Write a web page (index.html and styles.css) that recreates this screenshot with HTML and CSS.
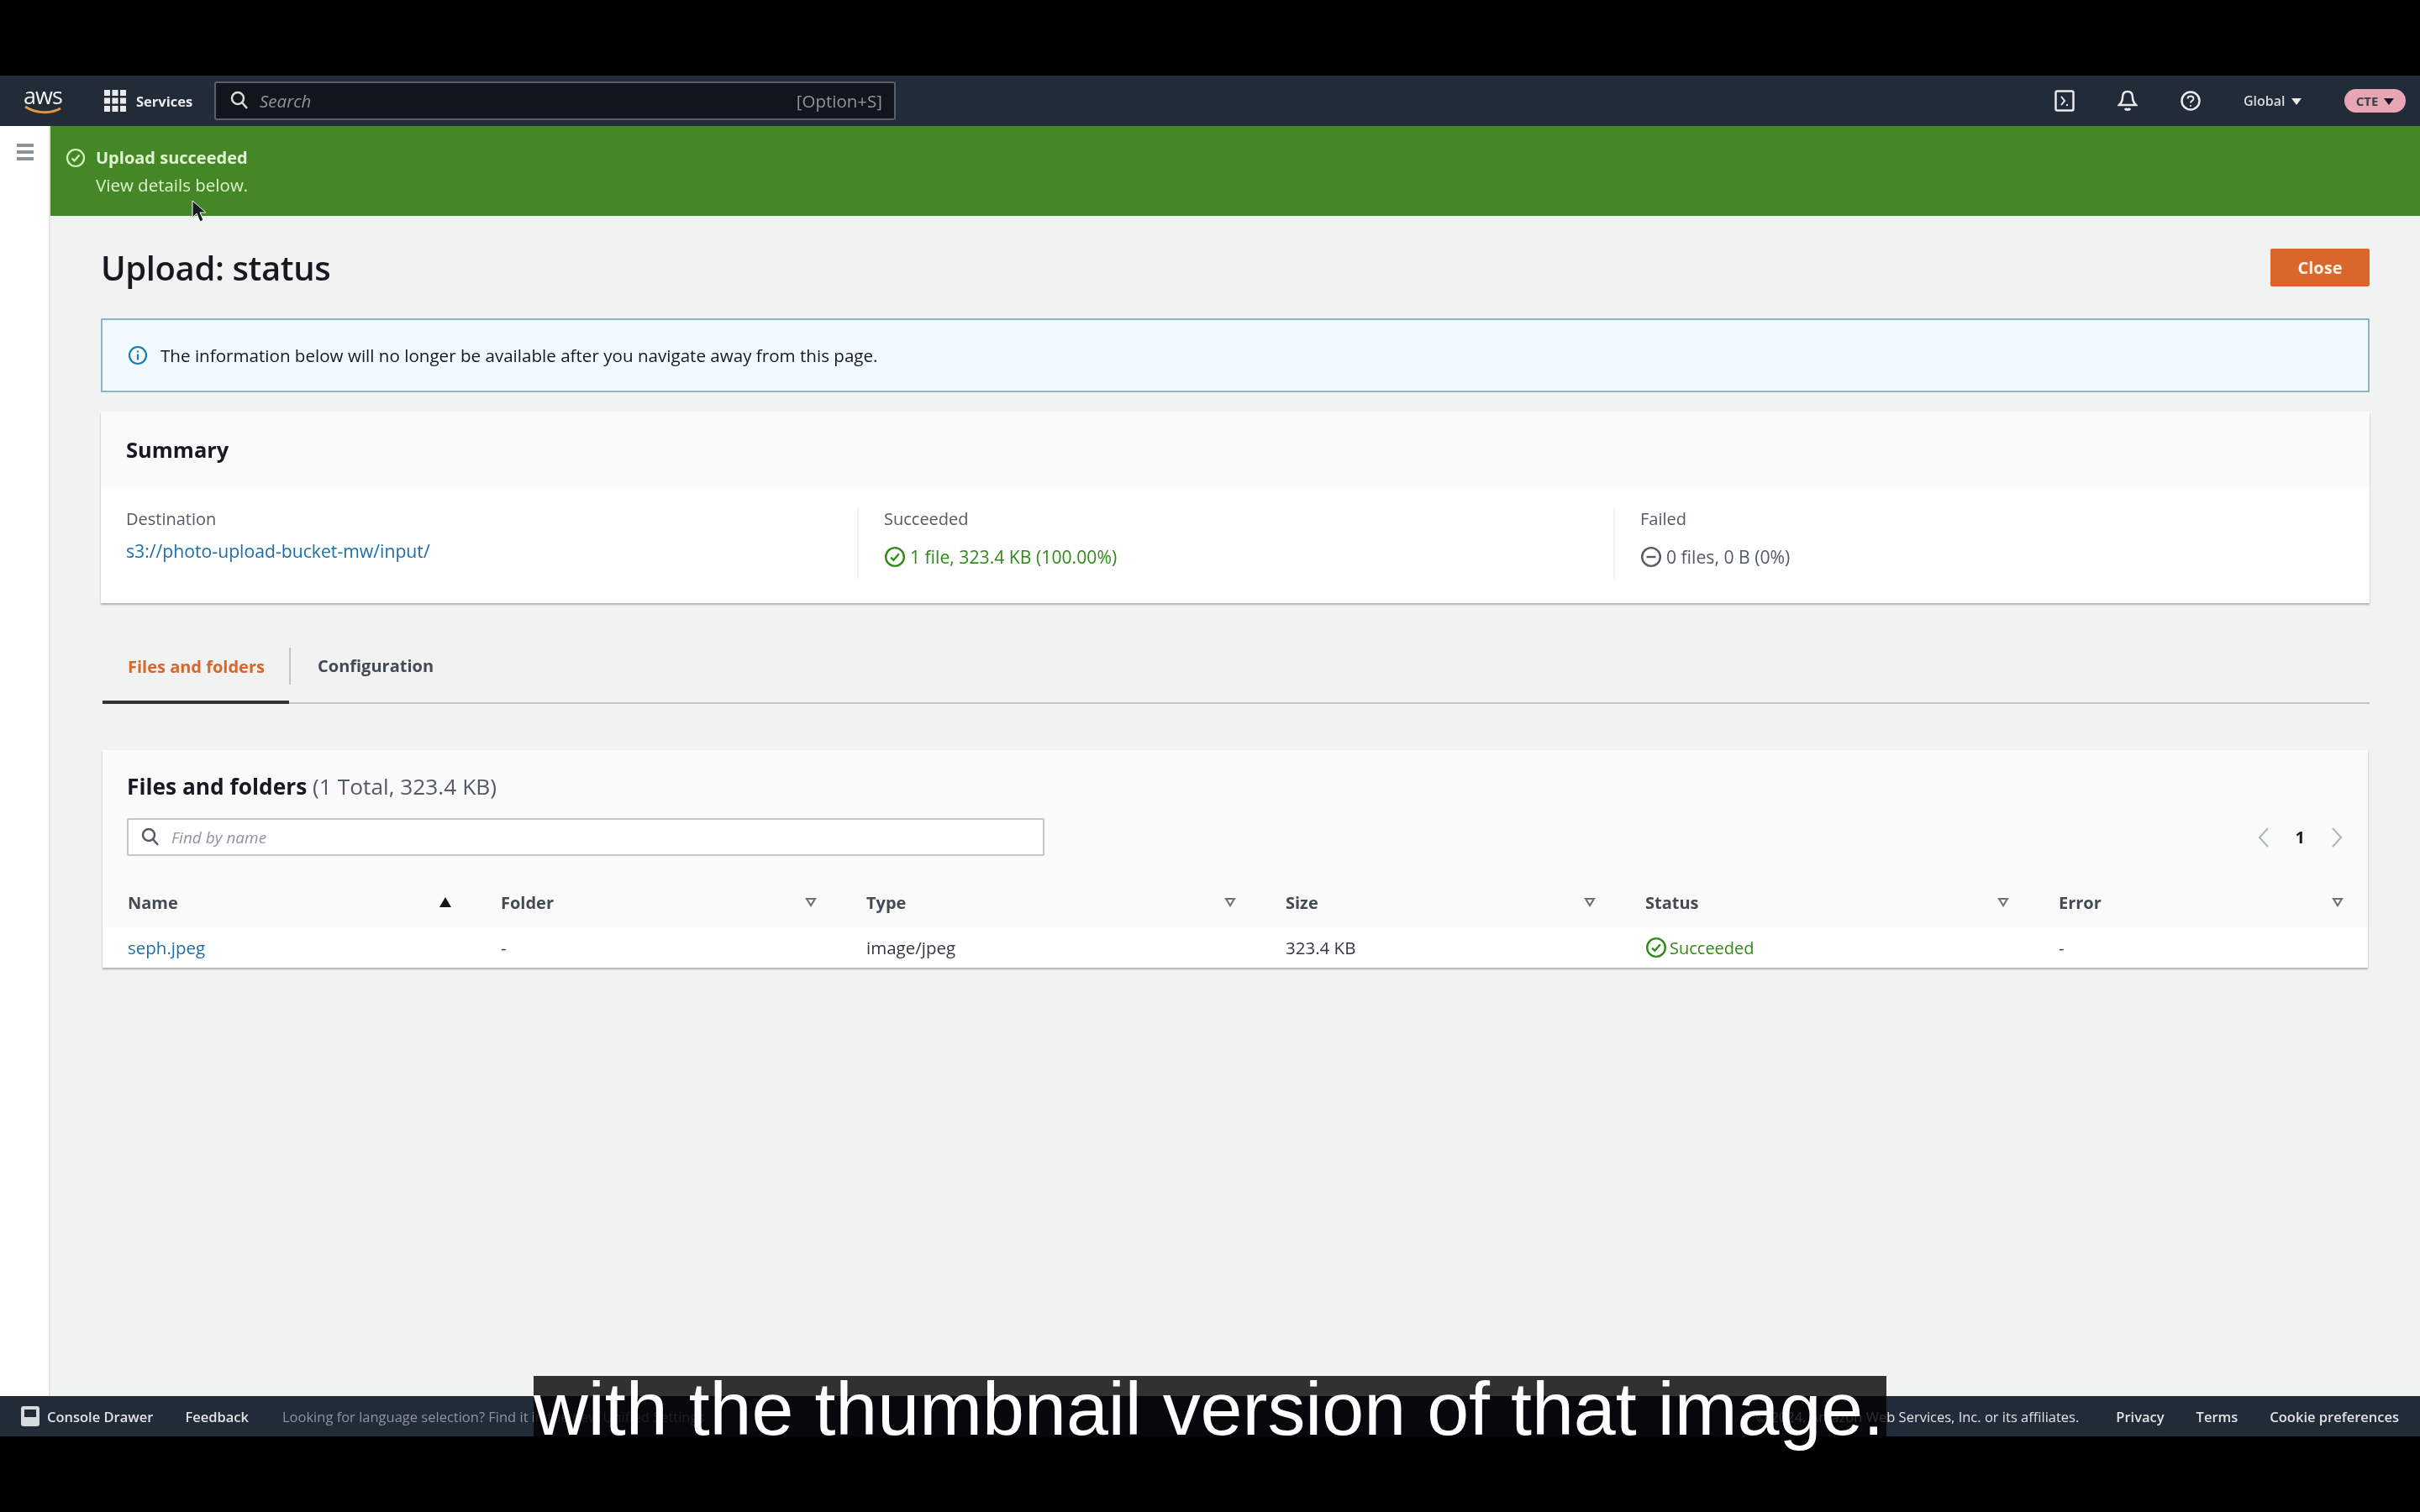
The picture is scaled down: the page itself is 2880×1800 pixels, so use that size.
FILE: index.html
```html
<!DOCTYPE html>
<html lang="en">
<head>
  <meta charset="UTF-8">
  <title>Upload: status</title>
  <link rel="stylesheet" href="styles.css">
</head>
<body>

  <div class="console">
    <header class="topnav">
      <div class="logo">
        <span class="logo-text">aws</span>
        <svg class="logo-smile" width="48" height="12" viewBox="0 0 48 12"><path d="M2 2c12 8 30 9 42 2" fill="none" stroke="#e0973a" stroke-width="3"/></svg>
      </div>
      <div class="services">
        <svg width="26" height="26" viewBox="0 0 26 26" fill="#e8eaed">
          <rect x="0" y="0" width="7" height="7"/><rect x="9.5" y="0" width="7" height="7"/><rect x="19" y="0" width="7" height="7"/>
          <rect x="0" y="9.5" width="7" height="7"/><rect x="9.5" y="9.5" width="7" height="7"/><rect x="19" y="9.5" width="7" height="7"/>
          <rect x="0" y="19" width="7" height="7"/><rect x="9.5" y="19" width="7" height="7"/><rect x="19" y="19" width="7" height="7"/>
        </svg>
        <span>Services</span>
      </div>
      <div class="searchbar">
        <svg width="22" height="24" viewBox="0 0 22 24" fill="none" stroke="#d5dbdb" stroke-width="2.5"><circle cx="9" cy="9" r="7"/><path d="M14 14l6 7"/></svg>
        <span class="search-hint">Search</span>
        <span class="search-key">[Option+S]</span>
      </div>
      <div class="nav-right">
        <svg class="nav-icon" width="24" height="26" viewBox="0 0 24 26" fill="none" stroke="#e8eaed" stroke-width="2.5"><rect x="1.5" y="1.5" width="21" height="23" rx="2"/><path d="M8 8l4 5-4 5" stroke-width="2"/><path d="M14 18h2" stroke-width="2"/></svg>
        <svg class="nav-icon" width="24" height="26" viewBox="0 0 24 26" fill="none" stroke="#e8eaed" stroke-width="2.5"><path d="M12 2c-4 0-6 3-6 7 0 4-1 6-4 9h20c-3-3-4-5-4-9 0-4-2-7-6-7z"/><path d="M9 22c1 2 5 2 6 0" stroke-width="3"/></svg>
        <svg class="nav-icon" width="24" height="24" viewBox="0 0 24 24" fill="none" stroke="#e8eaed" stroke-width="2.5"><circle cx="12" cy="12" r="10.5"/><path d="M8.5 9.5c0-4 7-4 7 0 0 2.500-3.500 2.500-3.500 5" stroke-width="2"/><circle cx="12" cy="18" r="1" fill="#e8eaed" stroke="none"/></svg>
        <span class="region">Global <i class="caret"></i></span>
        <span class="account">CTE <i class="caret caret-dark"></i></span>
      </div>
    </header>

    <div class="workspace">
      <aside class="sidebar">
        <div class="hamburger"><i></i><i></i><i></i></div>
      </aside>

      <div class="main">
        <div class="flash">
          <svg class="flash-icon" width="24" height="24" viewBox="0 0 24 24" fill="none" stroke="#d6f5c4" stroke-width="2.200"><circle cx="12" cy="12" r="10"/><path d="M7.500 12.500l3 3 6-7"/></svg>
          <div>
            <div class="flash-title">Upload succeeded</div>
            <div class="flash-text">View details below.</div>
          </div>
        </div>

        <div class="content">
          <div class="page-head">
            <h1>Upload: status</h1>
            <button class="btn-close">Close</button>
          </div>

          <div class="info">
            <svg width="24" height="24" viewBox="0 0 24 24" fill="none" stroke="#1c7ab5" stroke-width="2.200"><circle cx="12" cy="12" r="10"/><path d="M12 10.500v7"/><path d="M12 6.500v2"/></svg>
            <span>The information below will no longer be available after you navigate away from this page.</span>
          </div>

          <section class="card summary">
            <h2 class="card-head">Summary</h2>
            <div class="summary-cols">
              <div class="summary-col">
                <div class="label">Destination</div>
                <a class="link dest">s3://photo-upload-bucket-mw/input/</a>
              </div>
              <div class="summary-col">
                <div class="label">Succeeded</div>
                <div class="value ok">
                  <svg width="26" height="26" viewBox="0 0 24 24" fill="none" stroke="#2f8a17" stroke-width="2.200"><circle cx="12" cy="12" r="10"/><path d="M7.500 12.500l3 3 6-7"/></svg>
                  1 file, 323.4 KB (100.00%)
                </div>
              </div>
              <div class="summary-col">
                <div class="label">Failed</div>
                <div class="value muted">
                  <svg width="26" height="26" viewBox="0 0 24 24" fill="none" stroke="#545b64" stroke-width="2.200"><circle cx="12" cy="12" r="10"/><path d="M7 12h10"/></svg>
                  0 files, 0 B (0%)
                </div>
              </div>
            </div>
          </section>

          <div class="tabs">
            <div class="tab active">Files and folders</div>
            <div class="tab">Configuration</div>
          </div>

          <section class="card files">
            <div class="files-head">
              <h2 class="files-title">Files and folders <span>(1 Total, 323.4 KB)</span></h2>
              <div class="files-tools">
                <div class="finder">
                  <svg width="22" height="24" viewBox="0 0 22 24" fill="none" stroke="#545b64" stroke-width="2.500"><circle cx="9" cy="9" r="7"/><path d="M14 14l6 7"/></svg>
                  <span>Find by name</span>
                </div>
                <div class="pager">
                  <svg width="14" height="26" viewBox="0 0 14 26" fill="none" stroke="#aab7b8" stroke-width="2"><path d="M12 2L2 13l10 11"/></svg>
                  <b>1</b>
                  <svg width="14" height="26" viewBox="0 0 14 26" fill="none" stroke="#aab7b8" stroke-width="2"><path d="M2 2l10 11L2 24"/></svg>
                </div>
              </div>
            </div>

            <div class="table-row table-header">
              <div class="th">Name <svg width="14" height="12" viewBox="0 0 14 12"><path d="M7 0l7 12H0z" fill="#16191f"/></svg></div>
              <div class="th">Folder <svg width="14" height="12" viewBox="0 0 14 12"><path d="M2 2h10L7 10z" fill="none" stroke="#687078" stroke-width="2"/></svg></div>
              <div class="th">Type <svg width="14" height="12" viewBox="0 0 14 12"><path d="M2 2h10L7 10z" fill="none" stroke="#687078" stroke-width="2"/></svg></div>
              <div class="th">Size <svg width="14" height="12" viewBox="0 0 14 12"><path d="M2 2h10L7 10z" fill="none" stroke="#687078" stroke-width="2"/></svg></div>
              <div class="th">Status <svg width="14" height="12" viewBox="0 0 14 12"><path d="M2 2h10L7 10z" fill="none" stroke="#687078" stroke-width="2"/></svg></div>
              <div class="th th-last">Error <svg width="14" height="12" viewBox="0 0 14 12"><path d="M2 2h10L7 10z" fill="none" stroke="#687078" stroke-width="2"/></svg></div>
            </div>
            <div class="table-row table-body">
              <div><a class="link">seph.jpeg</a></div>
              <div>-</div>
              <div>image/jpeg</div>
              <div>323.4 KB</div>
              <div class="ok status-cell">
                <svg width="26" height="26" viewBox="0 0 24 24" fill="none" stroke="#2f8a17" stroke-width="2.200"><circle cx="12" cy="12" r="10"/><path d="M7.500 12.500l3 3 6-7"/></svg>
                Succeeded
              </div>
              <div>-</div>
            </div>
          </section>
        </div>
      </div>
    </div>

    <footer class="bottombar">
      <div class="foot-left">
        <svg width="22" height="24" viewBox="0 0 22 24"><rect x="0" y="0" width="22" height="24" rx="3" fill="#d5dbdb"/><rect x="4" y="4" width="14" height="9" fill="#232b37"/></svg>
        <span class="foot-drawer">Console Drawer</span>
        <span class="foot-feedback">Feedback</span>
        <span class="foot-note">Looking for language selection? Find it in the new Unified Settings</span>
      </div>
      <div class="foot-right">
        <span class="foot-copy">© 2024, Amazon Web Services, Inc. or its affiliates.</span>
        <span class="foot-privacy">Privacy</span>
        <span>Terms</span>
        <span>Cookie preferences</span>
      </div>
    </footer>
  </div>

  <svg class="cursor" width="20" height="28" viewBox="0 0 20 28"><path d="M2 1v20l5-5 4 10 4-2-4-9h7z" fill="#16191f" stroke="#fff" stroke-width="1"/></svg>

  <div class="caption">with the thumbnail version of that image.</div>

</body>
</html>
```

FILE: styles.css
```css
* {
  box-sizing: border-box;
}

body {
  margin: 0;
  height: 1800px;
  padding-top: 90px;
  background-color: #000;
  font-family: "Open Sans", "Noto Sans", sans-serif;
  color: #16191f;
  overflow: hidden;
}

.console {
  height: 1620px;
  display: flex;
  flex-direction: column;
  background-color: #f1f2f2;
  filter: blur(0.7px);
}

/* top nav */
.topnav {
  height: 60px;
  display: flex;
  align-items: center;
  padding-left: 28px;
  padding-right: 17px;
  background-color: #222b38;
  color: #e8eaed;
}

.logo {
  width: 96px;
  display: flex;
  flex-direction: column;
  font-size: 27px;
  line-height: 22px;
  color: #f2f3f3;
}

.logo-text {
  letter-spacing: -1px;
}

.services {
  width: 131px;
  display: flex;
  align-items: center;
  gap: 12px;
  font-size: 16.500px;
  font-weight: 700;
}

.searchbar {
  width: 811px;
  height: 46px;
  display: flex;
  align-items: center;
  padding: 0 14px 0 17px;
  background-color: #11161c;
  border: 2px solid #59606b;
  border-radius: 3px;
  color: #8d949c;
  font-size: 20.500px;
}

.search-hint {
  margin-left: 13px;
  font-style: italic;
}

.search-key {
  margin-left: auto;
}

.nav-right {
  margin-left: auto;
  display: flex;
  align-items: center;
}

.nav-icon {
  margin-right: 51px;
}

.region {
  width: 120px;
  font-size: 16px;
  font-weight: 600;
  color: #d5dbdb;
}

.caret {
  display: inline-block;
  margin-left: 3px;
  border-left: 6px solid transparent;
  border-right: 6px solid transparent;
  border-top: 8px solid #e8eaed;
  vertical-align: 1px;
}

.caret-dark {
  border-top-color: #16191f;
}

.account {
  width: 73px;
  height: 28px;
  line-height: 28px;
  text-align: center;
  border-radius: 14px;
  background-color: #e8a5b4;
  color: #3a3f48;
  font-size: 15px;
  font-weight: 700;
}

/* page */
.workspace {
  flex: 1;
  display: flex;
  min-height: 0;
}

.sidebar {
  width: 60px;
  padding: 21px 0 0 20px;
  background-color: #fff;
  border-right: 2px solid #e4e6e6;
}

.hamburger i {
  display: block;
  width: 20px;
  height: 4px;
  margin-bottom: 4px;
  background-color: #8a9199;
}

.main {
  flex: 1;
  min-width: 0;
}

.flash {
  height: 107px;
  display: flex;
  align-items: flex-start;
  gap: 12px;
  padding: 24px 0 0 18px;
  background-color: #458727;
  color: #dff5d0;
  font-size: 20px;
}

.flash-icon {
  flex-shrink: 0;
  margin-top: 2px;
}

.flash-title {
  font-weight: 700;
  line-height: 28px;
}

.flash-text {
  margin-top: 4px;
  font-size: 20.500px;
  line-height: 28px;
}

.content {
  padding: 0 60px 0 60px;
}

.page-head {
  height: 122px;
  display: flex;
  align-items: center;
  justify-content: space-between;
}

h1 {
  margin: 0;
  font-size: 40px;
  font-weight: 600;
  letter-spacing: -0.4px;
  color: #16191f;
}

.btn-close {
  width: 118px;
  height: 45px;
  border: none;
  border-radius: 2px;
  background-color: #d9662b;
  color: #fff3e6;
  font-family: inherit;
  font-size: 20px;
  font-weight: 700;
}

.info {
  height: 88px;
  display: flex;
  align-items: center;
  gap: 15px;
  padding-left: 30px;
  background-color: #f1faff;
  border: 2px solid #8fb4c9;
  font-size: 20.600px;
}

.card {
  background-color: #fff;
  box-shadow: 0 2px 2px rgba(0, 0, 0, 0.28);
}

.summary {
  margin-top: 23px;
}

.card-head {
  height: 91px;
  margin: 0;
  padding-left: 30px;
  line-height: 91px;
  background-color: #fafafa;
  font-size: 25.500px;
  font-weight: 700;
}

.summary-cols {
  height: 137px;
  display: grid;
  grid-template-columns: 870px 900px 1fr;
  padding-left: 30px;
}

.summary-col {
  padding-top: 23px;
  font-size: 20px;
}

.summary-col + .summary-col {
  padding-left: 30px;
  border-left: 2px solid #f1f2f2;
  height: 85px;
  margin-top: 23px;
  padding-top: 0;
}

.label {
  color: #545b64;
  line-height: 28px;
}

.link {
  color: #1b6fa8;
}

.dest {
  display: block;
  margin-top: 10px;
  font-size: 21.200px;
  line-height: 28px;
}

.value {
  display: flex;
  align-items: center;
  gap: 5px;
  margin-top: 17px;
  font-size: 21.200px;
  line-height: 28px;
}

.ok {
  color: #2f8a17;
}

.muted {
  color: #545b64;
}

/* tabs */
.tabs {
  height: 120px;
  display: flex;
  align-items: flex-end;
  margin-left: 2px;
  border-bottom: 2px solid #c5c8c8;
  font-size: 20px;
  font-weight: 700;
  color: #444b55;
}

.tab {
  height: 91px;
  line-height: 95px;
  padding: 0 34px;
  position: relative;
}

.tab.active {
  width: 222px;
  padding: 0 30px;
  line-height: 93px;
  color: #d9662b;
  border-bottom: 4px solid #333;
  margin-bottom: -2px;
  white-space: nowrap;
}

.tab.active::after {
  content: "";
  position: absolute;
  right: -2px;
  top: 24px;
  height: 44px;
  border-right: 2px solid #c5c8c8;
}

/* files table */
.files {
  margin: 55px 2px 0;
  height: 259px;
  background-color: #fafafa;
}

.files-head {
  height: 176px;
  padding: 24px 29px 0;
}

.files-title {
  margin: 0;
  line-height: 38px;
  font-size: 26.300px;
  font-weight: 700;
}

.files-title span {
  font-weight: 400;
  color: #545b64;
}

.files-tools {
  display: flex;
  align-items: center;
  justify-content: space-between;
  margin-top: 19px;
}

.finder {
  width: 1092px;
  height: 45px;
  display: flex;
  align-items: center;
  gap: 14px;
  padding-left: 15px;
  background-color: #fff;
  border: 2px solid #c2c7c9;
  border-radius: 2px;
  font-size: 19px;
  font-style: italic;
  color: #8d949c;
}

.pager {
  display: flex;
  align-items: center;
  gap: 31px;
  font-size: 20px;
  margin-right: 1px;
}

.table-row {
  display: grid;
  grid-template-columns: 444px 435px 499px 428px 492px 1fr;
  padding-left: 30px;
  font-size: 20.500px;
  align-items: center;
}

.table-header {
  margin-top: -29px;
  height: 64px;
  padding-top: 4px;
  font-size: 20px;
  font-weight: 700;
  color: #444b55;
}

.th {
  display: flex;
  align-items: center;
  justify-content: space-between;
  padding-right: 59px;
}

.th-last {
  padding-right: 29px;
}

.table-body {
  height: 48px;
  background-color: #fff;
  color: #333942;
}

.status-cell {
  display: flex;
  align-items: center;
  gap: 3px;
  font-size: 20px;
}

/* footer */
.bottombar {
  height: 48px;
  display: flex;
  align-items: center;
  justify-content: space-between;
  padding: 0 25px 0 25px;
  background-color: #222b38;
  color: #e0e3e6;
  font-size: 16.500px;
  font-weight: 600;
}

.foot-left,
.foot-right {
  display: flex;
  align-items: center;
}

.foot-drawer {
  margin-left: 9px;
}

.foot-feedback {
  margin-left: 38px;
}

.foot-note {
  margin-left: 40px;
  color: #8d949c;
  font-weight: 400;
}

.foot-right span {
  margin-left: 38px;
}

.foot-right .foot-privacy {
  margin-left: 44px;
}

.foot-right .foot-copy {
  font-weight: 400;
}

/* things on top of the page */
.cursor {
  position: absolute;
  left: 227px;
  top: 238px;
}

.caption {
  position: absolute;
  left: 635px;
  top: 1638px;
  width: 1610px;
  height: 72px;
  background-color: rgba(0, 0, 0, 0.8);
  color: #fff;
  font-family: "Liberation Sans", Arial, sans-serif;
  font-size: 89.800px;
  line-height: 78px;
  white-space: nowrap;
}
```
